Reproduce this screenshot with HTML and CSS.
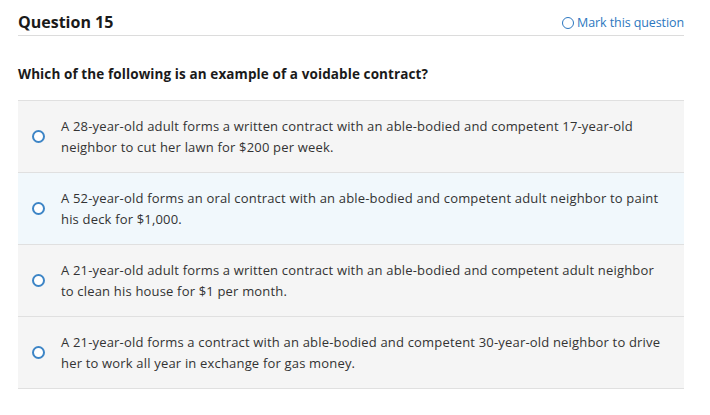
FILE: index.html
```html
<!DOCTYPE html>
<html>
<head>
<meta charset="utf-8">
<link rel="stylesheet" href="styles.css">
</head>
<body>
<div class="page">
  <div class="header">
    <h2 class="title">Question 15</h2>
    <a class="mark"><span class="mark-circle"></span>Mark this question</a>
  </div>
  <p class="prompt">Which of the following is an example of a voidable contract?</p>
  <div class="options">
    <div class="option">
      <span class="radio"></span>
      <div class="text">A 28-year-old adult forms a written contract with an able-bodied and competent 17-year-old neighbor to cut her lawn for $200 per week.</div>
    </div>
    <div class="option hover">
      <span class="radio"></span>
      <div class="text">A 52-year-old forms an oral contract with an able-bodied and competent adult neighbor to paint his deck for $1,000.</div>
    </div>
    <div class="option">
      <span class="radio"></span>
      <div class="text">A 21-year-old adult forms a written contract with an able-bodied and competent adult neighbor to clean his house for $1 per month.</div>
    </div>
    <div class="option">
      <span class="radio"></span>
      <div class="text">A 21-year-old forms a contract with an able-bodied and competent 30-year-old neighbor to drive her to work all year in exchange for gas money.</div>
    </div>
  </div>
</div>
</body>
</html>
```
FILE: styles.css
```css
* { box-sizing: border-box; }
body {
  margin: 0;
  background: #fff;
  font-family: "Open Sans", "Liberation Sans", sans-serif;
  color: #333;
}
.page {
  padding: 0 26px 0 18px;
}
.header {
  display: flex;
  justify-content: space-between;
  align-items: flex-end;
  height: 36px;
  padding-bottom: 3px;
  border-bottom: 1px solid #dcdcdc;
}
.title {
  margin: 0;
  font-size: 16px;
  font-weight: 700;
  color: #1a1a1a;
  line-height: 20px;
}
.mark {
  display: flex;
  align-items: center;
  gap: 3px;
  font-size: 12.5px;
  color: #2c77c0;
  line-height: 16px;
  letter-spacing: -0.1px;
  padding-bottom: 1px;
}
.mark-circle {
  width: 12px;
  height: 12px;
  border: 1.5px solid #2c77c0;
  border-radius: 50%;
}
.prompt {
  margin: 0;
  padding: 29px 0 17px;
  font-size: 13.5px;
  font-weight: 700;
  color: #1a1a1a;
  line-height: 18px;
  letter-spacing: 0.1px;
}
.options {
  border-top: 1px solid #e0e0e0;
}
.option {
  display: flex;
  align-items: center;
  min-height: 72px;
  background: #f5f5f5;
  border-bottom: 1px solid #e0e0e0;
  padding: 0 20px 0 14px;
}
.option.hover {
  background: #f1f8fc;
}
.radio {
  flex: none;
  width: 13px;
  height: 13px;
  border: 2px solid #3d85c6;
  border-radius: 50%;
  margin-right: 16px;
  background: #fff;
}
.text {
  font-size: 13px;
  line-height: 21px;
  color: #333;
  letter-spacing: 0.18px;
}
```
